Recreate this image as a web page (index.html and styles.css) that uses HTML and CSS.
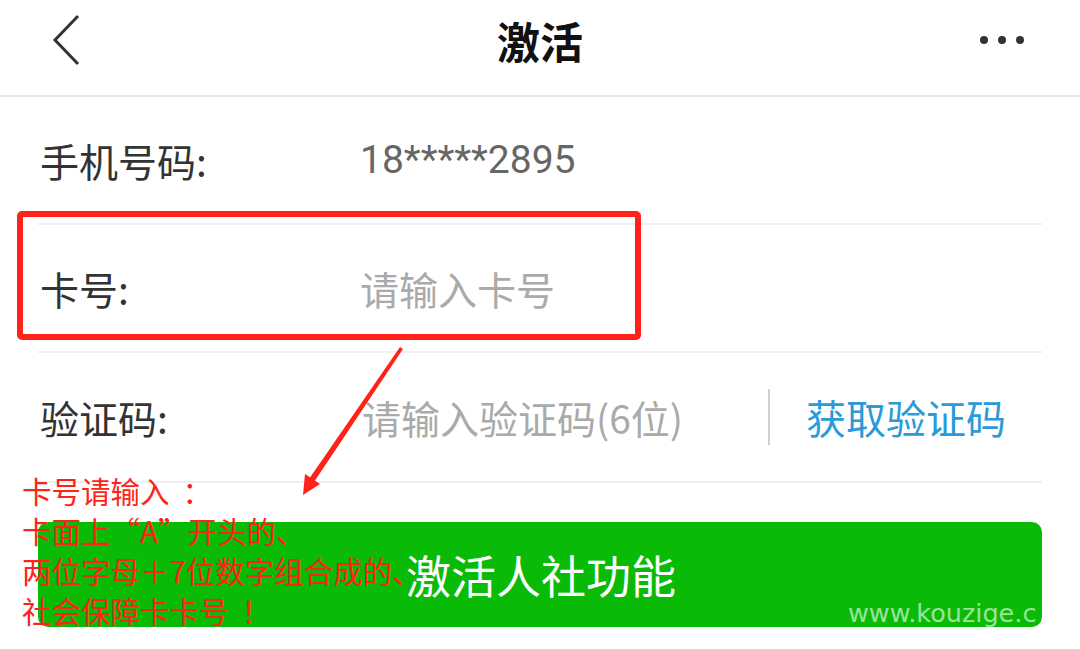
FILE: index.html
```html
<!DOCTYPE html>
<html lang="zh-CN">
<head>
<meta charset="utf-8">
<title>激活</title>
<link rel="stylesheet" href="styles.css">
</head>
<body>
<div class="page">
  <header class="nav">
    <svg class="back" width="40" height="56" viewBox="0 0 40 56"><polyline points="30,4 7,28 30,52" fill="none" stroke="#333" stroke-width="3" stroke-linejoin="miter"/></svg>
    <h1 class="title">激活</h1>
    <div class="more"><span></span><span></span><span></span></div>
  </header>
  <main class="form">
    <div class="row">
      <span class="label">手机号码:</span>
      <span class="value">18*****2895</span>
    </div>
    <div class="row">
      <span class="label">卡号:</span>
      <span class="placeholder">请输入卡号</span>
    </div>
    <div class="row">
      <span class="label">验证码:</span>
      <span class="placeholder grow">请输入验证码(6位)</span>
      <span class="sep"></span>
      <span class="get">获取验证码</span>
    </div>
  </main>
  <div class="submit">激活人社功能</div>

  <div class="mark-box"></div>
  <svg class="mark-arrow" width="1080" height="649" viewBox="0 0 1080 649">
    <polygon points="400,347 403,349 314,482 309,479" fill="#ff2218"/>
    <polygon points="303,495 305,474 320,484" fill="#ff2218"/>
  </svg>
  <div class="note">卡号请输入<span class="punct">：</span><br>卡面上“A”开头的、<br>两位字母＋7位数字组合成的、<br>社会保障卡卡号<span class="punct">！</span></div>
  <div class="watermark">www.kouzige.c</div>
</div>
</body>
</html>
```
FILE: styles.css
```css
* { box-sizing: border-box; }
html, body { margin: 0; padding: 0; background: #fff; }
body { font-family: "Noto Sans CJK SC", "Noto Sans", sans-serif; }
.page { position: relative; width: 1080px; height: 649px; overflow: hidden; background: #fff; }

.nav {
  height: 97px;
  border-bottom: 2px solid #e9e9e9;
  display: flex;
  align-items: center;
  justify-content: space-between;
  padding: 0 56px 16px 48px;
  position: relative;
}
.back { display: block; }
.title {
  position: absolute;
  left: 0; right: 0; top: 10px;
  margin: 0;
  text-align: center;
  font-size: 43px;
  font-weight: 700;
  color: #111;
  line-height: 60px;
}
.more { display: flex; gap: 10px; }
.more span { width: 8px; height: 8px; border-radius: 50%; background: #333; }

.form { padding: 0 38px; }
.row {
  height: 128px;
  border-bottom: 2px solid #efefef;
  display: flex;
  align-items: center;
  font-size: 39px;
}
.row:last-child { height: 130px; }
.label { width: 322px; padding-left: 2px; color: #333; }
.value { color: #666; font-family: Roboto, "Noto Sans CJK SC", sans-serif; }
.placeholder { color: #aaa; }
.grow { flex: 1; padding-left: 2px; }
.sep { width: 2px; height: 56px; background: #cfcfcf; margin-right: 36px; }
.get { color: #2a9ad8; width: 202px; margin-right: 34px; font-size: 40px; }

.submit {
  margin: 39px 38px 0;
  height: 105px;
  border-radius: 10px;
  background: #09bb07;
  color: #fff;
  font-size: 45px;
  display: flex;
  align-items: center;
  justify-content: center;
  padding-left: 2px;
}

.mark-box {
  position: absolute;
  left: 17px; top: 211px;
  width: 624px; height: 129px;
  border: 6px solid #ff2218;
  border-radius: 5px;
}
.mark-arrow { position: absolute; left: 0; top: 0; }
.note {
  position: absolute;
  left: 22px; top: 470px;
  font-size: 29.5px;
  line-height: 40px;
  color: #ff2218;
}
.punct { margin-left: 13px; }
.watermark {
  position: absolute;
  left: 848px; top: 595px;
  white-space: nowrap;
  font-family: "DejaVu Sans", sans-serif;
  font-size: 25.5px;
  line-height: 36px;
  color: rgba(255,255,255,0.6);
}
```
